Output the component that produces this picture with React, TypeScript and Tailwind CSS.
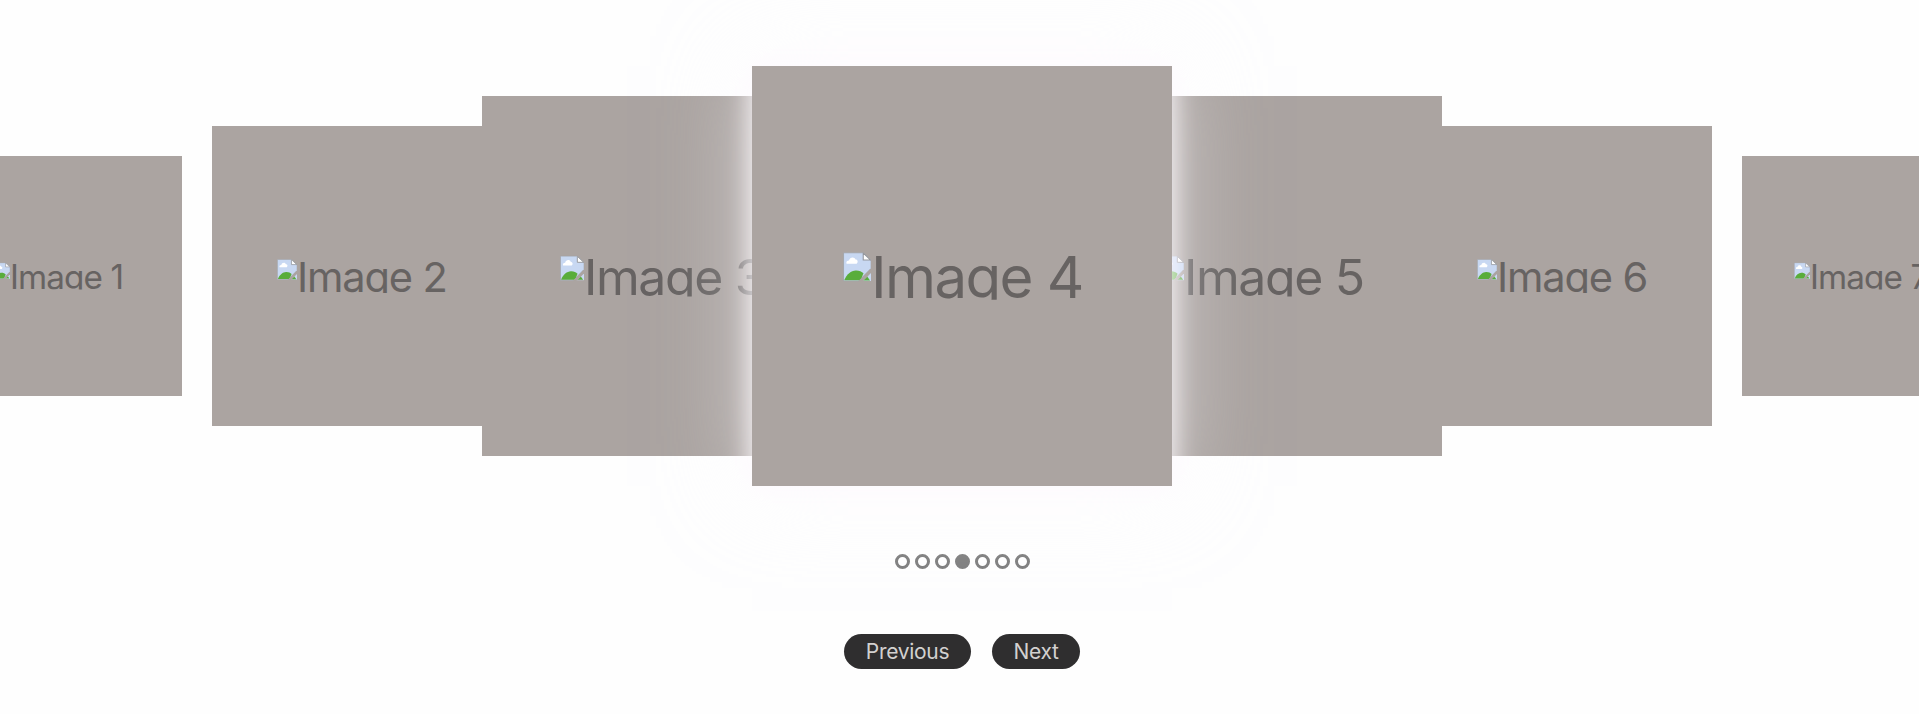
const slides = [
  { id: 1, size: 'z-0 scale-[0.8]' },
  { id: 2, size: 'z-10 scale-100' },
  { id: 3, size: 'z-20 scale-[1.2]' },
  { id: 4, size: 'z-30 scale-[1.4] shadow-[0_0_60px_rgba(254,252,255,0.5),0_0_16px_2px_rgba(255,252,255,0.85)]' },
  { id: 5, size: 'z-20 scale-[1.2]' },
  { id: 6, size: 'z-10 scale-100' },
  { id: 7, size: 'z-0 scale-[0.8]' },
];

function BrokenImageIcon() {
  return (
    <svg viewBox="0 0 21 21" className="h-[21px] w-[20.5px] shrink-0" preserveAspectRatio="none">
      <path d="M0.4 0.4H14.8L20.6 6V11.5L11.5 20.6H0.4Z" fill="#c8d8f2" stroke="#a3a6ad" strokeWidth="0.7" />
      <path d="M20.6 14V20.6H14Z" fill="#c8d8f2" />
      <path d="M2.6 8.2C2 6.6 3.4 5.8 4.4 5.9C4.9 3.2 8.6 3 9.2 5.3C10.8 5.2 11.3 7.3 10 8.2Z" fill="#fff" />
      <path d="M0.9 20.1C2.6 15.5 6 13.2 9.3 13C11.8 12.9 13.6 13.7 15 15.1L13.5 18.6L12 20.1Z" fill="#59ad3b" />
      <path d="M14.6 20.2L17.6 17.2L19.8 20.2Z" fill="#59ad3b" />
      <path d="M20.8 11.3L11.3 20.8H14.6L20.8 14.6Z" fill="#aba4a1" />
      <path d="M14.8 0.6V5.6H20.2Z" fill="#fff" stroke="#96989d" strokeWidth="0.8" />
    </svg>
  );
}

export default function App() {
  return (
    <main className="flex h-[714px] w-full flex-col items-center overflow-hidden bg-[#fefefe] pl-[5px] font-['Inter',sans-serif]">
      <div className="mt-[66px] flex h-[420px] w-full items-center justify-center">
        {slides.map(({ id, size }) => (
          <div
            key={id}
            className={`relative flex h-[300px] w-[300px] shrink-0 items-center justify-center bg-[#aba4a1] ${size}`}
          >
            <div className="flex h-[34.5px] w-[171px] items-start overflow-hidden whitespace-nowrap">
              <BrokenImageIcon />
              <span className="text-[41.6px] leading-[37.6px] tracking-[-1.15px] text-[#676362]">Image {id}</span>
            </div>
          </div>
        ))}
      </div>
      <div className="mt-[68px] flex gap-[5px]">
        {slides.map(({ id }) => (
          <button
            key={id}
            aria-label={`Slide ${id}`}
            className={`h-[15px] w-[15px] rounded-full border-3 border-[#818181] ${id === 4 ? 'bg-[#818181]' : 'bg-white'}`}
          />
        ))}
      </div>
      <div className="mt-[64.5px] flex gap-[21px] text-[21px] tracking-[-0.3px] text-[#d3d1d0]">
        <button className="h-[35.5px] w-[127px] rounded-full bg-[#2f2e2f] pt-px">Previous</button>
        <button className="h-[35.5px] w-[88px] rounded-full bg-[#2f2e2f] pt-px">Next</button>
      </div>
    </main>
  );
}
